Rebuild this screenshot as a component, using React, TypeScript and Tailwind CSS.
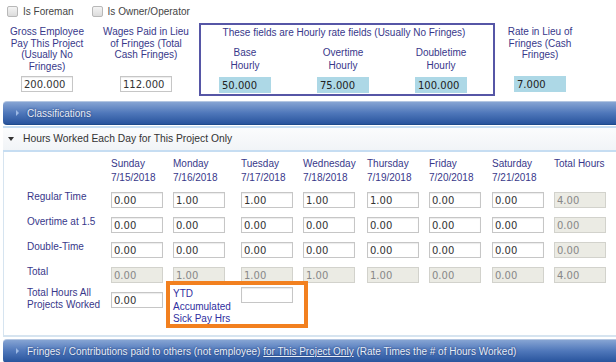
import React from "react";

const days = [
  ["Sunday", "7/15/2018"],
  ["Monday", "7/16/2018"],
  ["Tuesday", "7/17/2018"],
  ["Wednesday", "7/18/2018"],
  ["Thursday", "7/19/2018"],
  ["Friday", "7/20/2018"],
  ["Saturday", "7/21/2018"],
];

const rows = [
  { label: "Regular Time", values: ["0.00", "1.00", "1.00", "1.00", "1.00", "0.00", "0.00"], total: "4.00", locked: false },
  { label: "Overtime at 1.5", values: ["0.00", "0.00", "0.00", "0.00", "0.00", "0.00", "0.00"], total: "0.00", locked: false },
  { label: "Double-Time", values: ["0.00", "0.00", "0.00", "0.00", "0.00", "0.00", "0.00"], total: "0.00", locked: false },
  { label: "Total", values: ["0.00", "1.00", "1.00", "1.00", "1.00", "0.00", "0.00"], total: "4.00", locked: true },
];

const grid = "grid grid-cols-[84px_62px_68px_62px_64px_62px_63px_62px_52px]";

type BoxProps = { value: string; kind?: "plain" | "rate" | "locked"; className?: string };

const Box = ({ value, kind = "plain", className = "" }: BoxProps) => {
  const tone =
    kind === "rate"
      ? "bg-[#add8e6] border-[#add8e6] text-[#222]"
      : kind === "locked"
      ? "bg-[#ebebe4] border-[#d2d2cc] text-[#888]"
      : "bg-white border-[#c6c6c6] text-[#333] shadow-[inset_0_1px_1px_rgba(0,0,0,0.08)]";
  return (
    <input
      readOnly
      value={value}
      className={`block w-[52px] h-[16px] border px-[2px] text-[10px] leading-[14px] font-['DejaVu_Sans',Verdana,sans-serif] outline-none ${tone} ${className}`}
    />
  );
};

const Check = ({ label }: { label: string }) => (
  <label className="flex items-center gap-[5px] text-[#444]">
    <span className="w-[11px] h-[11px] rounded-[2px] border border-[#b8b8b8] bg-gradient-to-b from-[#f4f4f4] to-[#dcdcdc]" />
    {label}
  </label>
);

const Bar = ({ children }: { children: React.ReactNode }) => (
  <div className="ml-[3px] h-[24px] flex items-center gap-[8px] pl-[13px] rounded-l-[4px] border-t border-[#b3c6e2] border-b border-b-[#1f4b8c] bg-gradient-to-b from-[#86a4d3] via-[#4f77ba] to-[#28549d] text-[#e8eef8] [text-shadow:0_0_2px_rgba(15,40,100,0.95)]">
    <span className="w-0 h-0 border-y-[3px] border-y-transparent border-l-[3px] border-l-[#9db9e4]" />
    <span>{children}</span>
  </div>
);

const Label = ({ children, className = "" }: { children: React.ReactNode; className?: string }) => (
  <div className={`text-center text-[#38388a] leading-[11.7px] ${className}`}>{children}</div>
);

export default function App() {
  return (
    <div className="w-[616px] h-[362px] overflow-hidden bg-white text-[10px] font-['Liberation_Sans',Arial,sans-serif]">
      {/* flags */}
      <div className="h-[23px] flex items-center gap-[18px] pl-[7px] pb-[1px]">
        <Check label="Is Foreman" />
        <Check label="Is Owner/Operator" />
      </div>

      {/* pay fields */}
      <div className="flex items-start">
        <div className="w-[94px] h-[73px] flex flex-col items-center pt-[3px] pb-[4px]">
          <Label>
            Gross Employee
            <br />
            Pay This Project
            <br />
            (Usually No
            <br />
            Fringes)
          </Label>
          <Box value="200.000" className="mt-auto" />
        </div>
        <div className="w-[94px] ml-[5px] h-[73px] flex flex-col items-center pt-[3px] pb-[4px]">
          <Label>
            Wages Paid in Lieu
            <br />
            of Fringes (Total
            <br />
            Cash Fringes)
          </Label>
          <Box value="112.000" className="mt-auto" />
        </div>
        <div className="w-[296px] ml-[6px] h-[73px] border-2 border-[#5656a6] flex flex-col">
          <Label className="pt-[2px] pr-[6px] leading-[12px]">These fields are Hourly rate fields (Usually No Fringes)</Label>
          <div className="flex gap-[10px] mt-auto pb-[1px]">
            {["Base", "Overtime", "Doubletime"].map((k, i) => (
              <div key={k} className="w-[88px] flex flex-col items-center">
                <Label className="leading-[12.3px]">
                  {k}
                  <br />
                  Hourly
                </Label>
                <Box value={["50.000", "75.000", "100.000"][i]} kind="rate" className="mt-[5px]" />
              </div>
            ))}
          </div>
        </div>
        <div className="w-[90px] h-[73px] flex flex-col items-center pt-[3px] pb-[4px]">
          <Label>
            Rate in Lieu of
            <br />
            Fringes (Cash
            <br />
            Fringes)
          </Label>
          <Box value="7.000" kind="rate" className="mt-auto" />
        </div>
      </div>

      <div className="mt-[5px]">
        <Bar>Classifications</Bar>
      </div>

      {/* hours panel */}
      <div className="ml-[3px] mt-[1px] h-[26px] flex items-center gap-[9px] pl-[5px] border-t-2 border-b-2 border-[#c6ddf2] bg-gradient-to-b from-[#fbfcfd] to-[#f1f4f7] text-[#333] text-[10.3px]">
        <span className="w-0 h-0 border-x-[3px] border-x-transparent border-t-[4px] border-t-[#333]" />
        Hours Worked Each Day for This Project Only
      </div>
      <div className="relative ml-[3px] h-[185px] border-l border-b-2 border-[#d6e4f0] pl-[23px] pt-[5px] text-[#38388a]">
        <div className={`${grid} leading-[14px]`}>
          <div />
          {days.map(([d, dt]) => (
            <div key={d}>
              {d}
              <br />
              {dt}
            </div>
          ))}
          <div>Total Hours</div>
        </div>

        <div className="mt-[2px]">
          {rows.map((r) => (
            <div key={r.label} className={`${grid} h-[25px] items-start`}>
              <div className="mt-[3px] leading-[14px]">{r.label}</div>
              {r.values.map((v, i) => (
                <Box key={i} value={v} kind={r.locked ? "locked" : "plain"} className="mt-[5px]" />
              ))}
              <Box value={r.total} kind="locked" className="mt-[5px]" />
            </div>
          ))}
          <div className={`${grid} items-start`}>
            <div className="leading-[12px]">
              Total Hours All
              <br />
              Projects Worked
            </div>
            <Box value="0.00" className="mt-[5px]" />
            <div className="leading-[12.5px] text-[#2f2fa0] pt-[1px]">
              YTD
              <br />
              Accumulated
              <br />
              Sick Pay Hrs
            </div>
            <Box value="" />
          </div>
        </div>

        {/* highlight */}
        <div className="absolute left-[162px] top-[129px] w-[142px] h-[47px] border-[4px] border-[#f2801f]" />
      </div>

      <div className="mt-[2px]">
        <Bar>
          Fringes / Contributions paid to others (not employee) <span className="underline">for This Project Only</span> (Rate
          Times the # of Hours Worked)
        </Bar>
      </div>
    </div>
  );
}
